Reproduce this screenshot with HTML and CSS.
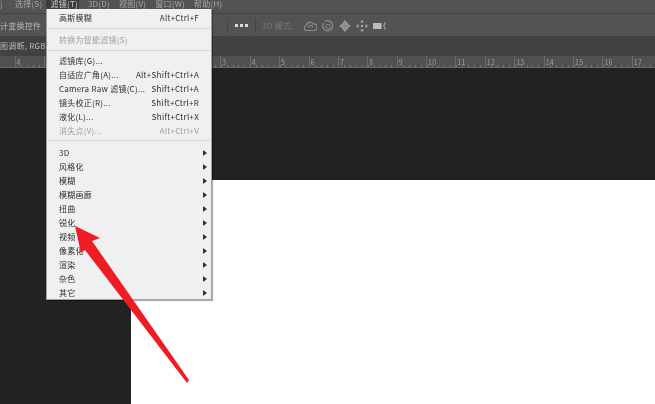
FILE: index.html
```html
<!DOCTYPE html>
<html lang="zh-CN">
<head>
    <meta charset="UTF-8">
    <title>滤镜菜单</title>
    <link rel="stylesheet" href="styles.css">
</head>
<body>
    <div class="app">
        <div class="menubar">
            <span class="menu-cut">)</span>
            <span class="menu-item">选择(S)</span>
            <span class="menu-item active">滤镜(T)</span>
            <span class="menu-item">3D(D)</span>
            <span class="menu-item">视图(V)</span>
            <span class="menu-item">窗口(W)</span>
            <span class="menu-item">帮助(H)</span>
        </div>
        <div class="toolbar">
            <span class="tool-label">计变换控件</span>
            <span class="tool-sep"></span>
            <span class="tool-dots"><i></i><i></i><i></i></span>
            <span class="tool-sep"></span>
            <span class="tool-mode">3D 模式:</span>
            <div class="tool-icons">
                <svg width="13" height="12" viewBox="0 0 13 12"><path d="M3 10.500a2.500 2.500 0 0 1-.5-5 3.500 3.500 0 0 1 6.500-1.500 3.200 3.200 0 0 1 1.500 6.500zM4.500 7.500a2 2 0 0 1 4 0" fill="none" stroke="#8c8c8c" stroke-width="1.200"/></svg>
                <svg width="12" height="12" viewBox="0 0 12 12"><path d="M3 1.500a5 5 0 1 1-1.500 1.500" fill="none" stroke="#8c8c8c" stroke-width="1.200"/><circle cx="6" cy="6.500" r="2.200" fill="none" stroke="#8c8c8c"/></svg>
                <svg width="12" height="12" viewBox="0 0 12 12"><path d="M6 0l2.500 3v.500H8.500L12 6 8.500 8.500v0L8.500 9 6 12 3.500 9v-.500L0 6l3.500-2.500V3z" fill="#9c9c9c"/><path d="M6 2v8M2 6h8" stroke="#6e6e6e" stroke-width=".6"/></svg>
                <svg width="12" height="12" viewBox="0 0 12 12"><g fill="#aaa"><path d="M6 0l2 2.500H4zM6 12l2-2.500H4zM0 6l2.500-2v4zM12 6L9.500 4v4z"/><circle cx="6" cy="6" r="1.200"/></g></svg>
                <svg width="13" height="8" viewBox="0 0 13 8"><path d="M0 1h8.500v6H0z" fill="#bcbcbc"/><path d="M12.500 .5Q9.500 4 12.500 7.500" fill="none" stroke="#a0a0a0" stroke-width="1.200"/></svg>
            </div>
        </div>
        <div class="tabbar">图调断, RGB/8</div>
        <div class="ruler" id="ruler"></div>
        <div class="canvas">
            <div class="doc"></div>
        </div>

        <div class="dropdown">
            <div class="row"><span>高斯模糊</span><span>Alt+Ctrl+F</span></div>
            <div class="divider wide-below"></div>
            <div class="row off"><span>转换为智能滤镜(S)</span></div>
            <div class="divider"></div>
            <div class="row"><span>滤镜库(G)...</span></div>
            <div class="row"><span>自适应广角(A)...</span><span>Alt+Shift+Ctrl+A</span></div>
            <div class="row"><span>Camera Raw 滤镜(C)...</span><span>Shift+Ctrl+A</span></div>
            <div class="row"><span>镜头校正(R)...</span><span>Shift+Ctrl+R</span></div>
            <div class="row"><span>液化(L)...</span><span>Shift+Ctrl+X</span></div>
            <div class="row off"><span>消失点(V)...</span><span>Alt+Ctrl+V</span></div>
            <div class="divider low"></div>
            <div class="row sub"><span>3D</span></div>
            <div class="row sub"><span>风格化</span></div>
            <div class="row sub"><span>模糊</span></div>
            <div class="row sub"><span>模糊画廊</span></div>
            <div class="row sub"><span>扭曲</span></div>
            <div class="row sub"><span>锐化</span></div>
            <div class="row sub"><span>视频</span></div>
            <div class="row sub"><span>像素化</span></div>
            <div class="row sub"><span>渲染</span></div>
            <div class="row sub"><span>杂色</span></div>
            <div class="row sub"><span>其它</span></div>
        </div>

        <svg class="arrow" width="655" height="404" viewBox="0 0 655 404">
            <path d="M75 226L100 238 92 241 189 380 187 383 85 250 81 253z" fill="#f01c24"/>
        </svg>
    </div>

    <script>
        // ruler counts down to 0, then up to 17. labels behind the open menu stay empty
        const labels = [4, 3, '', '', '', '', '', 3];
        for (let i = 4; i <= 17; i++) labels.push(i);
        const ruler = document.getElementById('ruler');
        labels.forEach(n => {
            const tick = document.createElement('span');
            tick.className = 'tick';
            tick.textContent = n;
            ruler.appendChild(tick);
        });
    </script>
</body>
</html>
```

FILE: styles.css
```css
/* Global Styles */
html, body {
    margin: 0;
    padding: 0;
    background-color: #222;
}

/* the whole screenshot is soft, so the blur sits on the root */
.app {
    position: relative;
    width: 655px;
    height: 404px;
    overflow: hidden;
    font-family: 'Noto Sans CJK SC', 'Liberation Sans', sans-serif;
    font-size: 8px;
    letter-spacing: 0.25px;
    color: #a8a8a8;
    filter: blur(0.6px);
}

/* Top bars */
.menubar {
    display: flex;
    height: 13px;
    line-height: 7px;
    background-color: #535353;
    border-bottom: 1px solid #444;
    overflow: hidden;
    white-space: nowrap;
}

.menu-cut {
    width: 15px;
}

.menu-item {
    margin-right: 9px;
}

.menu-item.active {
    margin-left: -5px;
    padding: 0 1px 0 4px;
    color: #ccc;
    background-color: #3c3c3c;
}

.toolbar {
    display: flex;
    align-items: center;
    height: 21px;
    padding-top: 1px;
    background-color: #535353;
    white-space: nowrap;
}

.tool-label {
    width: 227px;
    color: #b8b8b8;
}

.tool-sep {
    width: 1px;
    height: 15px;
    background-color: #444;
}

.tool-dots {
    display: flex;
    justify-content: center;
    gap: 2px;
    width: 27px;
}

.tool-dots i {
    width: 3px;
    height: 3px;
    background-color: #ddd;
}

.tool-mode {
    margin-left: 6px;
    width: 42px;
    color: #7a7a7a;
}

.tool-icons {
    display: flex;
    align-items: center;
    gap: 5px;
}

.tabbar {
    height: 20px;
    line-height: 20px;
    background-color: #424242;
    color: #b8b8b8;
    white-space: nowrap;
}

.ruler {
    display: flex;
    height: 12px;
    padding-left: 14.6px;
    background-color: #505050;
    background-image: repeating-linear-gradient(90deg, #777 0, #777 1px, transparent 1px, transparent 5.88px);
    background-size: 100% 2px;
    background-position: 14.6px bottom;
    background-repeat: no-repeat;
    border-bottom: 1px solid #666;
    box-sizing: border-box;
}

.tick {
    flex: 0 0 29.4px;
    box-sizing: border-box;
    padding-left: 1px;
    border-left: 1px solid #6b6b6b;
    font-size: 7px;
    line-height: 12px;
    color: #a0a0a0;
}

/* Canvas */
.canvas {
    display: flex;
    height: 336px;
    padding: 112px 0 0 131px;
    box-sizing: border-box;
    background-color: #222;
}

.doc {
    flex: 1;
    background-color: #fff;
}

/* Filter dropdown */
.dropdown {
    position: absolute;
    left: 46px;
    top: 9px;
    width: 166px;
    height: 291px;
    padding-top: 2px;
    box-sizing: border-box;
    background-color: #f0f0f0;
    border: 1px solid #a0a0a0;
    border-top: none;
    box-shadow: 1px 1px 1px rgba(0, 0, 0, 0.3);
    color: #2c2c2c;
}

.row {
    position: relative;
    display: flex;
    justify-content: space-between;
    height: 14px;
    line-height: 14px;
    padding: 0 12px;
    white-space: nowrap;
}

.row.off {
    color: #a0a0a0;
}

.row.sub::after {
    content: '';
    position: absolute;
    right: 4px;
    top: 4px;
    border-left: 4px solid #333;
    border-top: 3px solid transparent;
    border-bottom: 3px solid transparent;
}

.divider {
    height: 1px;
    margin: 3px 1px;
    background-color: #d6d6d6;
}

.divider.wide-below {
    margin-bottom: 4px;
}

.divider.low {
    margin: 2px 1px 5px;
}

.arrow {
    position: absolute;
    left: 0;
    top: 0;
}
```
